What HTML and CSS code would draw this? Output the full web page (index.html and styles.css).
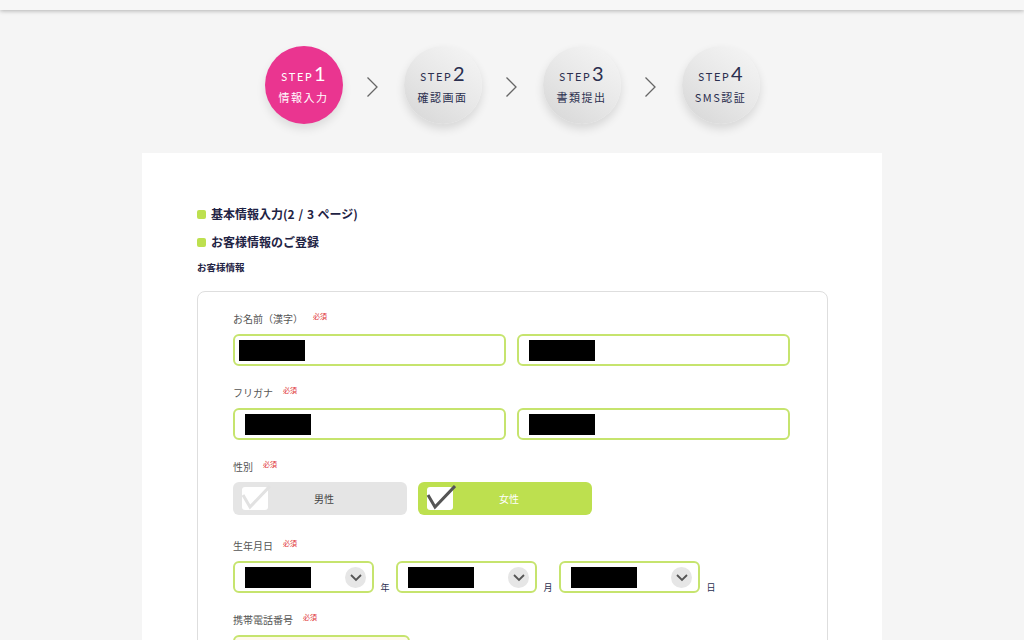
FILE: index.html
```html
<!doctype html>
<html lang="ja">
   <head>
      <meta charset="utf-8">
      <meta name="viewport" content="width=device-width, initial-scale=1, shrink-to-fit=no">
      <title>お客様情報のご登録</title>
      <link rel="stylesheet" href="styles.css">
   </head>
   <body>
      <header class="topbar"></header>

      <ol class="steps">
         <li class="step current"><span class="step-no">STEP<b>1</b></span><span class="step-name">情報入力</span></li>
         <li class="arrow"><svg viewBox="0 0 13 20" width="13" height="20"><path d="M1.5 0.5 L11 10 L1.5 19.5" fill="none" stroke="#666" stroke-width="1.3"/></svg></li>
         <li class="step"><span class="step-no">STEP<b>2</b></span><span class="step-name">確認画面</span></li>
         <li class="arrow"><svg viewBox="0 0 13 20" width="13" height="20"><path d="M1.5 0.5 L11 10 L1.5 19.5" fill="none" stroke="#666" stroke-width="1.3"/></svg></li>
         <li class="step"><span class="step-no">STEP<b>3</b></span><span class="step-name">書類提出</span></li>
         <li class="arrow"><svg viewBox="0 0 13 20" width="13" height="20"><path d="M1.5 0.5 L11 10 L1.5 19.5" fill="none" stroke="#666" stroke-width="1.3"/></svg></li>
         <li class="step"><span class="step-no">STEP<b>4</b></span><span class="step-name">SMS認証</span></li>
      </ol>

      <main class="card">
         <h2 class="bullet">基本情報入力(<span class="page">2 / 3</span> ページ)</h2>
         <h2 class="bullet">お客様情報のご登録</h2>
         <h3 class="sub">お客様情報</h3>

         <form class="box" onsubmit="return false;">
            <div class="field">
               <p class="label">お名前（漢字）<em>必須</em></p>
               <div class="row">
                  <div class="input"><span class="mask"></span></div>
                  <div class="input wide"><span class="mask"></span></div>
               </div>
            </div>

            <div class="field">
               <p class="label">フリガナ<em>必須</em></p>
               <div class="row">
                  <div class="input wide"><span class="mask"></span></div>
                  <div class="input wide"><span class="mask"></span></div>
               </div>
            </div>

            <div class="field gap">
               <p class="label">性別<em>必須</em></p>
               <div class="row">
                  <label class="gender">
                     <span class="check"><svg viewBox="0 0 30 26" width="30" height="26"><path d="M2 10 L9 22 L29 1" fill="none" stroke="#e2e2e2" stroke-width="3"/></svg></span>
                     男性
                  </label>
                  <label class="gender on">
                     <span class="check"><svg viewBox="0 0 30 26" width="30" height="26"><path d="M2 10 L9 22 L29 1" fill="none" stroke="#555" stroke-width="3"/></svg></span>
                     女性
                  </label>
               </div>
            </div>

            <div class="field">
               <p class="label">生年月日<em>必須</em></p>
               <div class="row dates">
                  <div class="select"><span class="mask"></span><i class="drop"><svg viewBox="0 0 12 8" width="12" height="8"><path d="M1 1 L6 6 L11 1" fill="none" stroke="#555" stroke-width="1.8"/></svg></i></div>
                  <span class="unit">年</span>
                  <div class="select"><span class="mask"></span><i class="drop"><svg viewBox="0 0 12 8" width="12" height="8"><path d="M1 1 L6 6 L11 1" fill="none" stroke="#555" stroke-width="1.8"/></svg></i></div>
                  <span class="unit">月</span>
                  <div class="select"><span class="mask"></span><i class="drop"><svg viewBox="0 0 12 8" width="12" height="8"><path d="M1 1 L6 6 L11 1" fill="none" stroke="#555" stroke-width="1.8"/></svg></i></div>
                  <span class="unit">日</span>
               </div>
            </div>

            <div class="field">
               <p class="label">携帯電話番号<em>必須</em></p>
               <div class="row">
                  <div class="input tel"></div>
               </div>
            </div>
         </form>
      </main>
   </body>
</html>
```

FILE: styles.css
```css
body {
margin: 0;
background: #f5f5f5;
font-family: "Noto Sans CJK JP", "Noto Sans", sans-serif;
color: #1f2344;
}
.topbar {
height: 10px;
background: #f7f7f7;
box-shadow: 0 1px 4px rgba(0,0,0,.28);
position: relative;
}

/* steps */
.steps {
list-style: none;
margin: 0;
padding: 36px 0 29px;
display: flex;
justify-content: center;
align-items: center;
gap: 23px;
}
.step {
width: 78px;
height: 78px;
border-radius: 50%;
display: flex;
flex-direction: column;
align-items: center;
justify-content: center;
background: linear-gradient(215deg, #f6f6f6 0%, #e9e9e9 45%, #d6d6d6 100%);
box-shadow: 0 5px 10px rgba(0,0,0,.12);
color: #2b2f4f;
}
.step.current {
background: #ea3590;
color: #fff;
box-shadow: 0 5px 10px rgba(0,0,0,.10);
}
.step-no {
font-family: Lato, "Noto Sans", sans-serif;
font-size: 11px;
letter-spacing: 1.6px;
line-height: 20px;
margin-top: -2px;
}
.step-no b {
font-weight: 400;
font-size: 20px;
letter-spacing: 0;
margin-left: 1px;
}
.step-name {
font-size: 11px;
letter-spacing: 1.5px;
line-height: 16px;
margin-top: 2px;
}
.arrow { width: 13px; height: 20px; margin: 4px 2px 0 0; }
.arrow svg { display: block; }

/* card */
.card {
width: 740px;
margin: 0 auto;
background: #fff;
box-sizing: border-box;
padding: 51px 54px 40px 55px;
}
.bullet {
margin: 0 0 8px;
font-size: 12px;
line-height: 20px;
font-weight: 700;
display: flex;
align-items: center;
white-space: pre;
}
.bullet:before {
content: '';
width: 9px;
height: 9px;
border-radius: 2px;
background: #bde04f;
margin-right: 5px;
}
.page { letter-spacing: 0.6px; }
.sub {
margin: 3px 0 17px;
font-size: 9.5px;
line-height: 14px;
font-weight: 700;
}

.box {
border: 1px solid #dedede;
border-radius: 8px;
padding: 20px 35px 20px;
}
.field { margin-bottom: 20px; }
.field.gap { margin-bottom: 24px; }
.label {
margin: 0 0 8px;
height: 14px;
display: flex;
align-items: center;
font-size: 10px;
line-height: 14px;
color: #555;
}
.label em {
font-style: normal;
font-size: 7px;
line-height: 1;
color: #e03434;
margin: -6px 0 0 10px;
}
.row {
display: flex;
gap: 11px;
align-items: flex-end;
}
.input {
width: 273px;
height: 32px;
box-sizing: border-box;
border: 2px solid #c6e46e;
border-radius: 6px;
background: #fff;
padding: 4px 0 0 4px;
}
.input.wide { padding-left: 10px; }
.input.tel { width: 177px; background: #fff9ea; }
.mask {
display: block;
width: 66px;
height: 21px;
background: #000;
}

.gender {
width: 174px;
height: 33px;
border-radius: 6px;
background: #e5e5e5;
display: flex;
align-items: center;
justify-content: center;
position: relative;
font-size: 10px;
color: #444;
padding-left: 8px;
box-sizing: border-box;
}
.gender.on { background: #bde04f; color: #fff; }
.check {
position: absolute;
left: 9px;
top: 5px;
width: 26px;
height: 23px;
border-radius: 3px;
background: #fff;
}
.check svg {
position: absolute;
left: -1px;
top: -2px;
}

.dates { gap: 0; }
.select {
width: 141px;
height: 32px;
box-sizing: border-box;
border: 2px solid #c6e46e;
border-radius: 6px;
background: #fff;
padding: 4px 0 0 10px;
position: relative;
}
.drop {
position: absolute;
right: 6px;
top: 4px;
width: 21px;
height: 21px;
border-radius: 50%;
background: #e6e6e6;
display: flex;
align-items: center;
justify-content: center;
}
.drop svg { margin-top: 1px; }
.unit {
width: 22px;
text-align: center;
font-size: 9px;
line-height: 12px;
color: #2b2f4f;
margin-bottom: -1px;
}
```
